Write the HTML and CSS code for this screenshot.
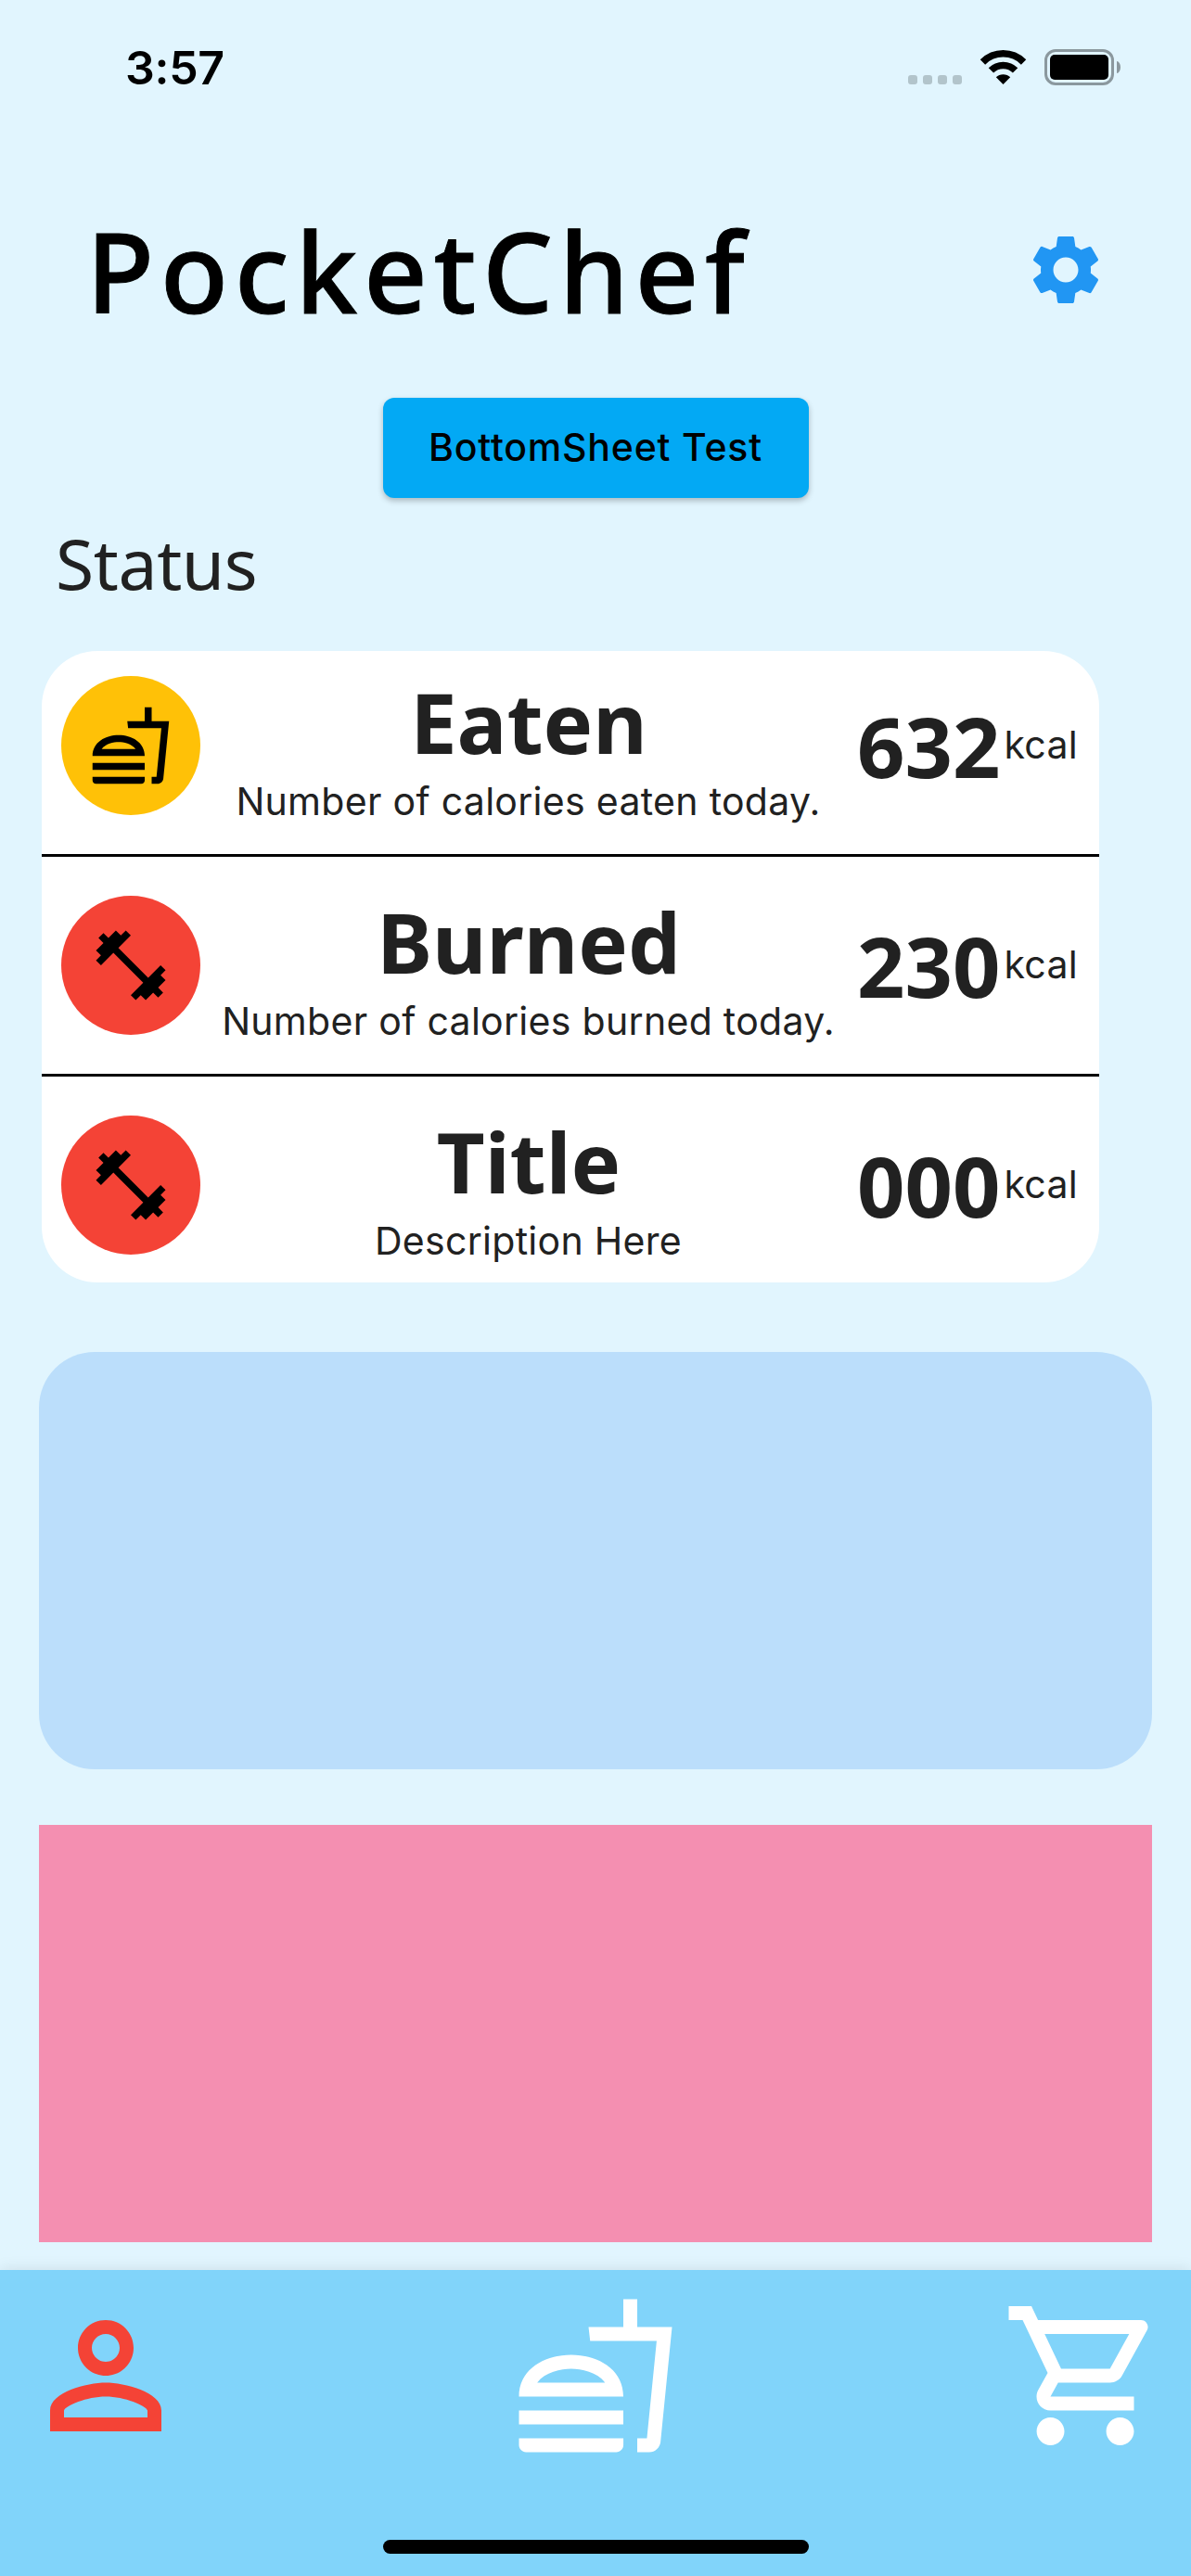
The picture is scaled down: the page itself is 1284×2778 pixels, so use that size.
FILE: index.html
```
<!DOCTYPE html>
<html lang="en">
<head>
<meta charset="utf-8">
<title>PocketChef</title>
<link rel="stylesheet" href="styles.css">
</head>
<body>
<svg class="sprite" aria-hidden="true">
  <symbol id="fastfood" viewBox="0 0 24 24"><path d="M1 21.98c0 .56.45 1.01 1.01 1.01H15c.56 0 1.01-.45 1.01-1.01V21H1v.98zM8.5 8.99C4.75 8.99 1 11 1 15h15c0-4-3.75-6.01-7.5-6.01zM3.62 13c1.11-1.55 3.47-2.01 4.88-2.01s3.77.46 4.88 2.01H3.62zM1 17h15v2H1v-2zM18 5V1h-2v4h-5l.23 2h9.56l-1.4 14H18v2h1.72c.84 0 1.53-.65 1.63-1.47L23 5h-5z"/></symbol>
  <symbol id="fitness" viewBox="0 0 24 24"><path d="M20.57 14.86L22 13.43 20.57 12 17 15.57 8.43 7 12 3.43 10.57 2 9.14 3.43 7.71 2 5.57 4.14 4.14 2.71 2.71 4.14l1.43 1.43L2 7.71l1.43 1.43L2 10.57 3.43 12 7 8.43 15.57 17 12 20.57 13.43 22l1.43-1.43L16.29 22l2.14-2.14 1.43 1.43 1.43-1.43-1.43-1.43L22 16.29z"/></symbol>
</svg>
<div class="screen">
  <div class="statusbar">
    <span class="time">3:57</span>
    <div class="indicators">
      <div class="signal"><i></i><i></i><i></i><i></i></div>
      <svg class="wifi" viewBox="0 0 51 37">
        <g fill="none" stroke="#000" stroke-width="7.6"><path d="M3.44 12.940A31.200 31.200 0 0 1 47.560 12.940"/><path d="M12.420 21.920A18.500 18.500 0 0 1 38.580 21.920"/></g>
        <path d="M25.500 37l-7.700-7.700a11 11 0 0 1 15.400 0z"/>
      </svg>
      <div class="battery"><div class="cell"><div class="charge"></div></div><div class="nub"></div></div>
    </div>
  </div>
  <header class="header">
    <h1 class="brand">PocketChef</h1>
    <svg class="gear" viewBox="0 0 24 24"><path d="M19.14 12.94c.04-.3.06-.61.06-.94 0-.32-.02-.64-.07-.94l2.03-1.580c.18-.14.23-.41.12-.61l-1.920-3.320c-.12-.22-.37-.29-.59-.22l-2.390.96c-.5-.38-1.030-.7-1.620-.94l-.36-2.540c-.04-.24-.24-.41-.48-.41h-3.840c-.24 0-.43.17-.47.41l-.36 2.540c-.59.24-1.130.57-1.620.94l-2.390-.96c-.22-.08-.47 0-.59.22L2.740 8.870c-.12.21-.08.47.12.61l2.030 1.580c-.05.3-.09.63-.09.94s.02.64.07.94l-2.030 1.580c-.18.14-.23.41-.12.61l1.920 3.320c.12.22.37.29.59.22l2.390-.96c.5.38 1.030.7 1.620.94l.36 2.540c.05.24.24.41.48.41h3.840c.24 0 .44-.17.47-.41l.36-2.540c.59-.24 1.130-.56 1.620-.94l2.390.96c.22.08.47 0 .59-.22l1.920-3.320c.12-.22.07-.47-.12-.61l-2.010-1.580zM12 15.600c-1.980 0-3.600-1.620-3.600-3.600s1.620-3.600 3.600-3.600 3.600 1.620 3.600 3.600-1.620 3.600-3.600 3.600z"/></svg>
  </header>
  <button class="sheet-button">BottomSheet Test</button>
  <h2 class="section-title">Status</h2>
  <section class="card">
    <div class="row">
      <div class="avatar amber"><svg><use href="#fastfood"/></svg></div>
      <div class="info"><div class="name">Eaten</div><div class="desc">Number of calories eaten today.</div></div>
      <div class="value">632</div><div class="unit">kcal</div>
    </div>
    <div class="row">
      <div class="avatar red"><svg><use href="#fitness"/></svg></div>
      <div class="info"><div class="name">Burned</div><div class="desc">Number of calories burned today.</div></div>
      <div class="value">230</div><div class="unit">kcal</div>
    </div>
    <div class="row">
      <div class="avatar red"><svg><use href="#fitness"/></svg></div>
      <div class="info"><div class="name">Title</div><div class="desc">Description Here</div></div>
      <div class="value">000</div><div class="unit">kcal</div>
    </div>
  </section>
  <div class="panel blue"></div>
  <div class="panel pink"></div>
  <nav class="nav">
    <div class="tabs">
      <svg class="active" viewBox="0 0 24 24"><path d="M12 4C9.790 4 8 5.790 8 8s1.790 4 4 4 4-1.790 4-4-1.790-4-4-4zm0 6c-1.100 0-2-.9-2-2s.9-2 2-2 2 .9 2 2-.9 2-2 2zM12 13c-2.670 0-8 1.340-8 4v3h16v-3c0-2.660-5.330-4-8-4zm6 5H6v-.99c.2-.72 3.300-2.010 6-2.010s5.800 1.290 6 2v1z"/></svg>
      <svg><use href="#fastfood"/></svg>
      <svg viewBox="0 0 24 24"><path d="M15.550 13c.75 0 1.410-.41 1.750-1.030l3.580-6.490c.37-.66-.11-1.480-.87-1.480H5.210l-.94-2H1v2h2l3.600 7.590-1.350 2.440C4.520 15.370 5.480 17 7 17h12v-2H7l1.100-2h7.450zM6.160 6h12.150l-2.760 5H8.530L6.160 6zM7 18c-1.100 0-1.990.9-1.990 2S5.900 22 7 22s2-.9 2-2-.9-2-2-2zm10 0c-1.100 0-1.990.9-1.990 2s.89 2 1.990 2 2-.9 2-2-.9-2-2-2z"/></svg>
    </div>
    <div class="home-indicator"></div>
  </nav>
</div>
</body>
</html>
```
FILE: styles.css
```
* { box-sizing: border-box; }
body {
  margin: 0;
  background: #e1f5fe;
  color: #212121;
  font-family: Inter, "Liberation Sans", sans-serif;
}
.sprite { display: none; }
.screen { display: flex; flex-direction: column; width: 1284px; height: 2778px; }

.statusbar { display: flex; justify-content: space-between; height: 132px; padding: 42px 76px 0 135px; color: #000; }
.time { font-size: 50px; line-height: 62px; font-weight: 580; letter-spacing: -.3px; }
.indicators { display: flex; height: 60px; padding-top: 11px; }
.signal { display: flex; gap: 6px; margin: 28px 19px 0 0; }
.signal i { width: 10px; height: 10px; border-radius: 3px; background: #b2c4cb; }
.wifi { width: 51px; height: 37px; margin: 1px 19px 0 0; }
.battery { display: flex; align-items: center; gap: 3px; height: 39px; }
.cell { width: 75px; height: 39px; padding: 3px; border: 3px solid #8b989e; border-radius: 12px; }
.charge { height: 27px; border-radius: 5px; background: #000; }
.nub { width: 4px; height: 13px; border-radius: 0 4px 4px 0 / 0 6.5px 6.5px 0; background: #8b989e; }

.header { display: flex; align-items: center; justify-content: space-between; height: 160px; margin-top: 80px; padding: 0 90px 0 93px; }
.brand { margin: 0; color: #000; font: 500 120px/160px "Noto Sans", sans-serif; letter-spacing: 6.6px; -webkit-text-stroke: .9px #000; }
.gear { width: 90px; height: 90px; margin-bottom: 2px; fill: #2196f3; }

.sheet-button {
  align-self: center; width: 459px; height: 108px; margin-top: 57px; padding: 0 0 2px;
  border: 0; border-radius: 12px; background: #03a9f4; color: #000;
  box-shadow: 0 3px 6px rgba(0, 0, 0, .25);
  font: 450 41px/50px Inter, sans-serif;
  letter-spacing: .8px;
}
.section-title { margin: 21px 0 1px 60px; font: 400 75px/98px "Noto Sans", sans-serif; letter-spacing: -.4px; }

.card { width: 1140px; margin: 45px 0 0 45px; overflow: hidden; border-radius: 60px; background: #fff; }
.row { display: flex; align-items: center; height: 237px; padding: 0 23px 0 21px; border-bottom: 3px solid #000; }
.row:first-child { height: 222px; padding-top: 27px; padding-bottom: 42px; }
.row:last-child { height: 222px; padding-top: 42px; padding-bottom: 30px; border: 0; }
.avatar { display: flex; align-items: center; justify-content: center; width: 150px; height: 150px; border-radius: 50%; }
.avatar svg { width: 90px; height: 90px; }
.amber { background: #ffc107; }
.red { background: #f44336; }
.info { flex: 1; margin: -12px 0 -10px; text-align: center; white-space: nowrap; }
.name, .value { font: 700 90px/123px "Noto Sans", sans-serif; }
.desc, .unit { font-size: 41px; font-weight: 370; line-height: 48px; letter-spacing: .3px; }
.desc { margin-bottom: 2px; padding-right: 1px; }
.unit { margin: 0 0 2px 4px; }

.panel { height: 450px; margin: 75px 42px 0; }
.blue { border-radius: 60px; background: #bbdefb; }
.pink { margin-top: 60px; background: #f48fb1; }

.nav { display: flex; flex-direction: column; align-items: center; height: 330px; margin-top: 30px; padding-top: 24px; background: #81d4fa; box-shadow: 0 0 16px rgba(0, 0, 0, .1); }
.tabs { display: flex; justify-content: space-between; width: 1236px; fill: #fff; }
.tabs svg { width: 180px; height: 180px; }
.tabs .active { fill: #f44336; }
.home-indicator { width: 459px; height: 15px; margin-top: 87px; border-radius: 8px; background: #000; }
```
